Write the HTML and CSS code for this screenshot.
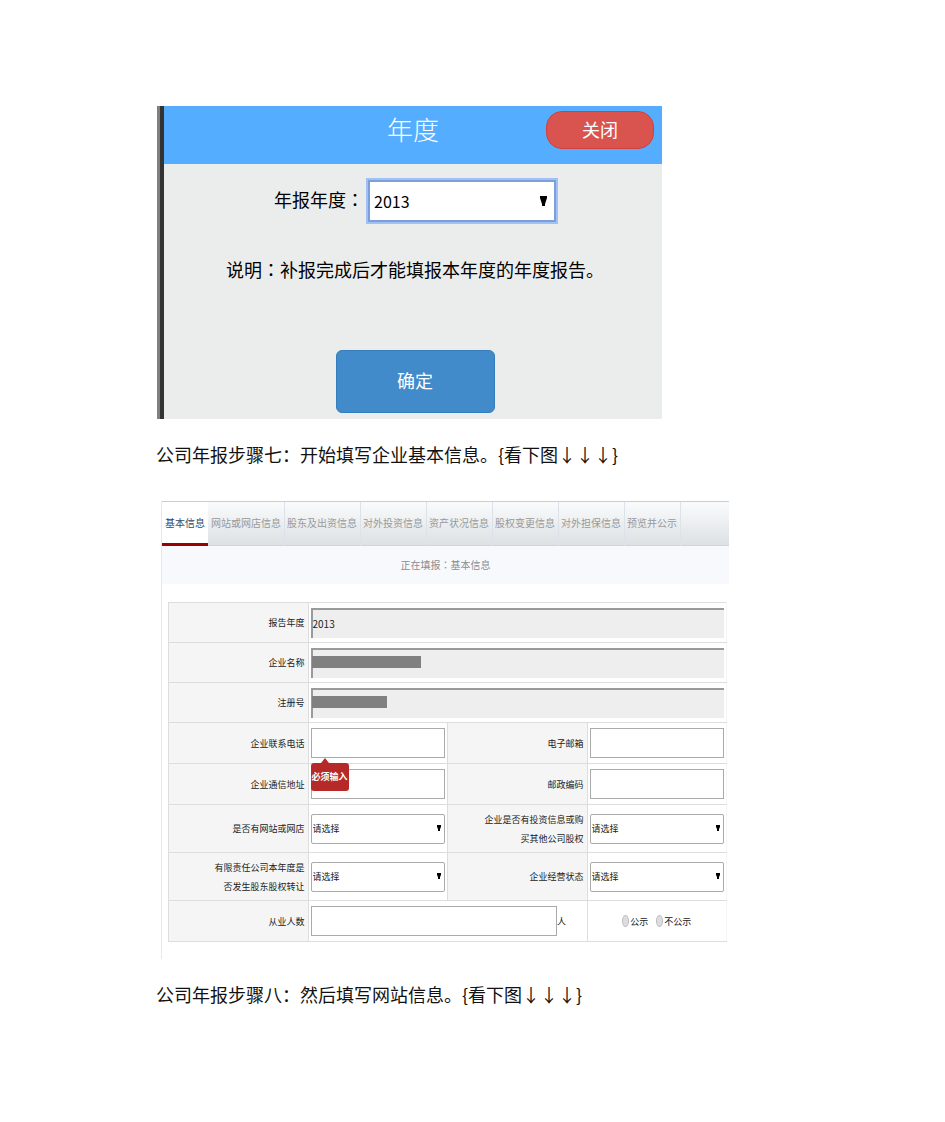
FILE: index.html
```html
<!DOCTYPE html>
<html lang="zh-CN">
<head>
<meta charset="utf-8">
<title>公司年报步骤</title>
<link rel="stylesheet" href="styles.css">
</head>
<body>
<main class="page">
  <section class="dialog">
    <header class="dialog-head">
      <h1 class="dialog-title">年度</h1>
      <button class="btn-close" type="button">关闭</button>
    </header>
    <div class="dialog-body">
      <div class="year-row">
        <label for="year">年报年度<span class="colon" lang="zh-TW">：</span></label>
        <span class="picker picker-year">
          <select id="year"><option>2013</option></select>
          <svg class="arrow" viewBox="0 0 7 10" aria-hidden="true"><path d="M0 0h7v2L5 8v2H2V8L0 2z"/></svg>
        </span>
      </div>
      <p class="note">说明<span class="colon" lang="zh-TW">：</span>补报完成后才能填报本年度的年度报告。</p>
      <button class="btn-ok" type="button">确定</button>
    </div>
  </section>

  <p class="step">公司年报步骤七：开始填写企业基本信息。{看下图↓↓↓}</p>

  <section class="panel">
    <nav class="tabs">
      <a class="tab active" href="#base">基本信息</a>
      <a class="tab" href="#site">网站或网店信息</a>
      <a class="tab" href="#holder">股东及出资信息</a>
      <a class="tab" href="#invest">对外投资信息</a>
      <a class="tab" href="#asset">资产状况信息</a>
      <a class="tab" href="#change">股权变更信息</a>
      <a class="tab" href="#guard">对外担保信息</a>
      <a class="tab" href="#preview">预览并公示</a>
    </nav>
    <p class="status">正在填报<span class="colon" lang="zh-TW">：</span>基本信息</p>
    <form class="form">
      <table class="grid">
        <tr class="row-fixed">
          <th><label for="f-year">报告年度</label></th>
          <td colspan="3"><input class="field fixed" id="f-year" type="text" value="2013" readonly></td>
        </tr>
        <tr class="row-fixed">
          <th><label for="f-name">企业名称</label></th>
          <td colspan="3"><div class="cover"><input class="field fixed" id="f-name" type="text" readonly><span class="mask mask-name"></span></div></td>
        </tr>
        <tr class="row-fixed">
          <th><label for="f-no">注册号</label></th>
          <td colspan="3"><div class="cover"><input class="field fixed" id="f-no" type="text" readonly><span class="mask mask-no"></span></div></td>
        </tr>
        <tr class="row-input">
          <th><label for="f-tel">企业联系电话</label></th>
          <td><div class="cover"><input class="field" id="f-tel" type="text"><span class="tip" role="alert">必须输入</span></div></td>
          <th><label for="f-mail">电子邮箱</label></th>
          <td><input class="field" id="f-mail" type="text"></td>
        </tr>
        <tr class="row-input">
          <th><label for="f-addr">企业通信地址</label></th>
          <td><input class="field" id="f-addr" type="text"></td>
          <th><label for="f-zip">邮政编码</label></th>
          <td><input class="field" id="f-zip" type="text"></td>
        </tr>
        <tr class="row-select">
          <th><label for="f-web">是否有网站或网店</label></th>
          <td><span class="picker"><select class="field" id="f-web"><option>请选择</option></select><svg class="arrow" viewBox="0 0 4 6" aria-hidden="true"><path d="M0 0h4v2L3 4v2H1V4L0 2z"/></svg></span></td>
          <th><label for="f-inv">企业是否有投资信息或购<br>买其他公司股权</label></th>
          <td><span class="picker"><select class="field" id="f-inv"><option>请选择</option></select><svg class="arrow" viewBox="0 0 4 6" aria-hidden="true"><path d="M0 0h4v2L3 4v2H1V4L0 2z"/></svg></span></td>
        </tr>
        <tr class="row-select">
          <th><label for="f-trans">有限责任公司本年度是<br>否发生股东股权转让</label></th>
          <td><span class="picker"><select class="field" id="f-trans"><option>请选择</option></select><svg class="arrow" viewBox="0 0 4 6" aria-hidden="true"><path d="M0 0h4v2L3 4v2H1V4L0 2z"/></svg></span></td>
          <th><label for="f-state">企业经营状态</label></th>
          <td><span class="picker"><select class="field" id="f-state"><option>请选择</option></select><svg class="arrow" viewBox="0 0 4 6" aria-hidden="true"><path d="M0 0h4v2L3 4v2H1V4L0 2z"/></svg></span></td>
        </tr>
        <tr class="row-input">
          <th><label for="f-staff">从业人数</label></th>
          <td colspan="2"><div class="staff"><input class="field" id="f-staff" type="text"><span>人</span></div></td>
          <td>
            <div class="choices">
              <label class="choice"><input type="radio" name="open">公示</label>
              <label class="choice"><input type="radio" name="open">不公示</label>
            </div>
          </td>
        </tr>
      </table>
    </form>
  </section>

  <p class="step">公司年报步骤八：然后填写网站信息。{看下图↓↓↓}</p>
</main>
</body>
</html>
```
FILE: styles.css
```css
* { box-sizing: border-box; }

body {
  margin: 0;
  background: #fff;
  color: #111;
  font-family: "Noto Sans CJK SC", sans-serif;
}

h1, p { margin: 0; font-weight: 400; }
button, input, select { font: inherit; color: inherit; margin: 0; }

.colon { font-family: "Noto Sans CJK TC", sans-serif; }

.page { padding: 106px 216px 80px 156px; }

/* year dialog */
.dialog {
  margin: 0 67px 0 1px;
  border-left: 3px solid #808080;
  background: #ebeded;
  box-shadow: inset 4px 0 #333;
  padding-left: 4px;
}

.dialog-head {
  display: grid;
  grid-template-columns: 1fr auto 1fr;
  align-items: start;
  padding: 5px 8px 15px;
  background: #54adff;
  color: #fff;
}

.dialog-title {
  grid-column: 2;
  font-size: 26px;
  font-weight: 300;
  line-height: 36px;
}

.btn-close {
  justify-self: end;
  width: 108px;
  height: 38px;
  padding: 0 0 2px;
  border: 1px solid #d43f3a;
  border-radius: 16px;
  background: #d9534f;
  font-size: 18px;
  line-height: 34px;
}

.dialog-body {
  display: flex;
  flex-direction: column;
  align-items: center;
  padding: 16px 0 6px 4px;
  color: #000;
  font-size: 18px;
  line-height: 24px;
}

.year-row { display: flex; align-items: center; gap: 4px; }
.year-row label { padding-bottom: 4px; }

.picker { position: relative; display: block; }

.picker select { appearance: none; display: block; }

.arrow {
  position: absolute;
  top: 50%;
  right: 4px;
  width: 4px;
  height: 6px;
  margin-top: -4px;
  pointer-events: none;
}

.picker-year select {
  width: 188px;
  height: 42px;
  padding: 0 4px;
  border: 2px solid #7b9fdb;
  border-radius: 0;
  outline: 2px solid #a1c1f4;
  background: #fff;
  font-size: 16px;
}

.picker-year .arrow { right: 9px; width: 7px; height: 10px; margin-top: -5px; }

.note { margin-top: 35px; }

.btn-ok {
  width: 159px;
  height: 63px;
  margin-top: 69px;
  padding: 0 0 4px;
  border: 1px solid #357ebd;
  border-radius: 6px;
  background: #428bca;
  color: #fff;
  font-size: 18px;
}

/* instructions between the figures */
.step {
  padding: 23px 0;
  font-size: 18px;
  line-height: 24px;
  white-space: nowrap;
}

/* report form */
.panel {
  margin: 12px 0 0 5px;
  padding-bottom: 17px;
  border-left: 1px solid #e8e8e8;
}

.tabs {
  display: flex;
  height: 45px;
  border-top: 1px solid #c3cfdc;
  border-bottom: 1px solid #cbd6e1;
  background: linear-gradient(#fafbfc, #dde1e4);
}

.tab {
  height: 44px;
  padding: 0 3px;
  border-right: 1px solid #dbe2e9;
  color: #999;
  font-size: 10px;
  line-height: 42px;
  text-decoration: none;
  white-space: nowrap;
  margin-right: -1px;
}

.tab.active {
  border-right: 0;
  border-bottom: 3px solid #990005;
  background: #fff;
  color: #33475f;
  margin-right: 0;
}

.status {
  background: #f8f9fc;
  color: #888d92;
  font-size: 10px;
  line-height: 38px;
  text-align: center;
}

.form { padding: 18px 2px 0 6px; }

.grid {
  width: 100%;
  table-layout: fixed;
  border-collapse: collapse;
  border: 1px solid #ddd;
  border-right-color: #f5f5f5;
  color: #222;
  font-size: 9px;
  line-height: 19px;
}

.grid th, .grid td {
  padding: 0 3px;
  border: 1px solid #ddd;
  font-weight: 400;
}

.grid td { padding: 0 2px; }
.grid td:last-child { border-right-color: #f5f5f5; }
.grid th { background: #f5f5f5; text-align: right; }
.grid label { display: block; }

.row-fixed { height: 40px; }
.row-input { height: 41px; }
.row-select { height: 48px; }

.field {
  display: block;
  width: 100%;
  height: 30px;
  padding: 0 1px;
  border: 1px solid #aaa;
  border-radius: 0;
  background: #fff;
}

.fixed {
  border-width: 2px 0 0 2px;
  border-color: #9a9a9a;
  background: #eee;
  padding: 0;
  font-size: 10px;
}

select.field { border-radius: 2px; }

.cover { position: relative; }

.mask {
  position: absolute;
  top: 8px;
  left: 1px;
  height: 12px;
  background: #808080;
}

.mask-name { width: 109px; }
.mask-no { width: 75px; }

.tip {
  position: absolute;
  top: 35px;
  left: 0;
  z-index: 1;
  padding: 0 1px;
  border-radius: 3px;
  background: #b52a28;
  color: #fff;
  font-weight: 700;
  line-height: 28px;
  white-space: nowrap;
}

.tip::before {
  content: "";
  position: absolute;
  top: -5px;
  left: 10px;
  border: solid transparent;
  border-width: 0 4px 5px;
  border-bottom-color: #b52a28;
}

.staff { display: flex; align-items: center; }
.staff .field { width: 90%; }

.choices { display: flex; justify-content: center; gap: 8px; }
.grid .choice { display: flex; align-items: center; gap: 1px; }

.choice input {
  appearance: none;
  width: 7px;
  height: 12px;
  border: 1px solid #bbb;
  border-radius: 50%;
  background: #ddd;
}
```
